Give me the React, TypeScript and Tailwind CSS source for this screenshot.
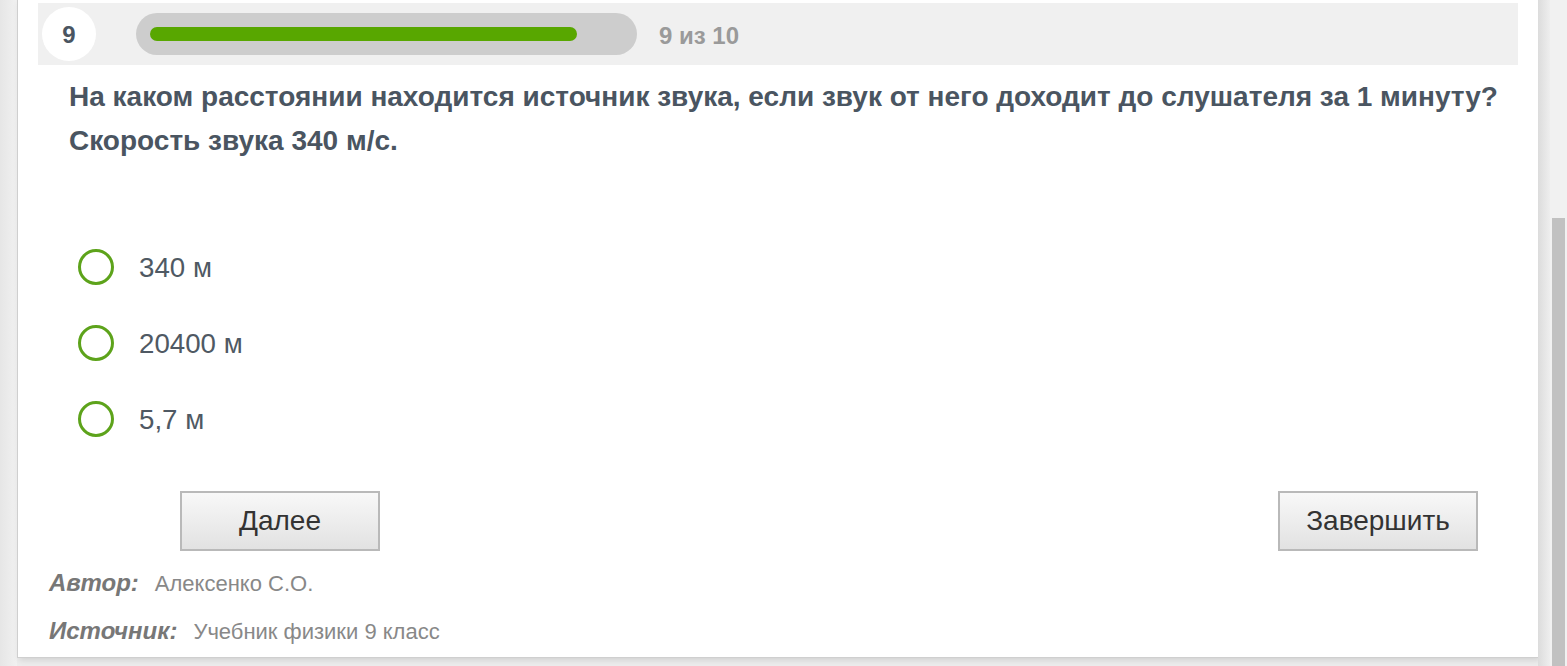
import React from "react";

const options = ["340 м", "20400 м", "5,7 м"];

export default function App() {
  return (
    <div
      className="flex h-[666px] w-[1567px] overflow-hidden bg-[#ececec]"
      style={{ fontFamily: '"Liberation Sans", Arial, sans-serif' }}
    >
      <div className="w-[17px] shrink-0 bg-gradient-to-r from-[#e6e6e6] to-[#f1f1f1]" />
      <div className="flex h-[658px] w-[1521px] shrink-0 flex-col border-b border-l border-[#cfcfcf] bg-white px-[20px] pt-[3px] shadow-[2px_2px_6px_rgba(0,0,0,0.12)]">
        <div className="flex h-[62px] w-[1480px] items-center bg-[#f0f0f0] pl-[4px]">
          <div className="flex h-[54px] w-[54px] items-center justify-center rounded-full bg-white pt-[2px] text-[24px] font-bold text-[#4a5561]">
            9
          </div>
          <div className="ml-[40px] flex h-[42px] w-[501px] items-center rounded-full bg-[#cdcdcd] px-[14px]">
            <div className="h-[14px] w-[427px] rounded-full bg-[#58a700]" />
          </div>
          <div className="ml-[22px] pt-[3px] text-[24px] font-bold text-[#9a9a9a]">9 из 10</div>
        </div>
        <div className="mt-[10px] whitespace-nowrap pl-[31px] text-[28px] font-bold leading-[44px] text-[#4a5561]">
          На каком расстоянии находится источник звука, если звук от него доходит до слушателя за 1 минуту?
          <br />
          Скорость звука 340 м/с.
        </div>
        <div className="mt-[66px] flex flex-col">
          {options.map((o) => (
            <div key={o} className="flex h-[76px] items-center pl-[40px]">
              <div className="h-[36px] w-[36px] rounded-full border-[3px] border-[#5da31b]" />
              <div className="ml-[25px] pt-[2px] text-[27.7px] text-[#4f5963]">{o}</div>
            </div>
          ))}
        </div>
        <div className="mt-[34px] flex justify-between pl-[142px] pr-[40px]">
          <button className="h-[60px] w-[200px] border-2 border-[#b9b9b9] bg-gradient-to-b from-[#f8f8f8] to-[#e2e2e2] text-[28px] text-[#333]">
            Далее
          </button>
          <button className="h-[60px] w-[200px] border-2 border-[#b9b9b9] bg-gradient-to-b from-[#f8f8f8] to-[#e2e2e2] text-[28px] text-[#333]">
            Завершить
          </button>
        </div>
        <div className="mt-[8px] pl-[11px] text-[22px] leading-[47px]">
          <div>
            <span className="text-[24px] font-bold italic text-[#777]">Автор:</span>
            <span className="ml-[16px] text-[#888]">Алексенко С.О.</span>
          </div>
          <div>
            <span className="text-[24px] font-bold italic text-[#777]">Источник:</span>
            <span className="ml-[16px] text-[#888]">Учебник физики 9 класс</span>
          </div>
        </div>
      </div>
      <div className="w-[12px] shrink-0 bg-gradient-to-r from-[#dcdcdc] to-[#eeeeee]" />
      <div className="flex w-[17px] shrink-0 flex-col bg-[#f1f1f1] px-[2px] pt-[218px]">
        <div className="flex-1 bg-[#c1c1c1]" />
      </div>
    </div>
  );
}
